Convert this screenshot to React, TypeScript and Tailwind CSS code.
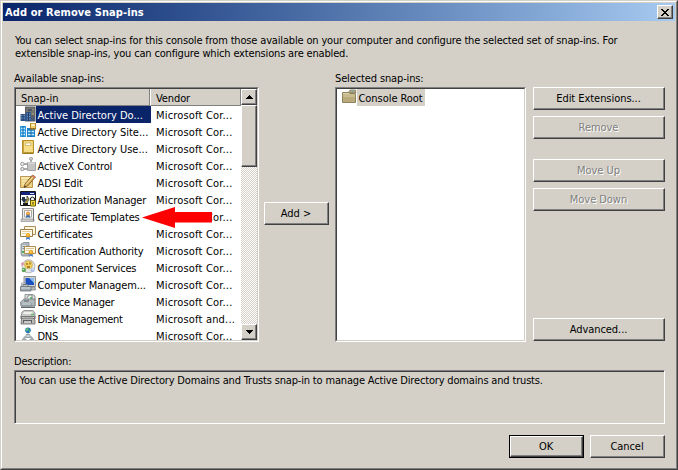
import type { ReactNode } from "react";

const RAISED =
  "border border-t-white border-l-white border-r-[#404040] border-b-[#404040] shadow-[inset_-1px_-1px_0_#808080]";
const SUNKEN =
  "border border-t-[#808080] border-l-[#808080] border-r-white border-b-white";
const SUNKEN_INNER =
  "border border-t-[#404040] border-l-[#404040] border-r-[#d4d0c8] border-b-[#d4d0c8]";

function Svg({ children, className = "" }: { children: ReactNode; className?: string }) {
  return (
    <svg width="16" height="16" viewBox="0 0 16 16" className={`block shrink-0 ${className}`}>
      {children}
    </svg>
  );
}

function Ribbon({ x, y }: { x: number; y: number }) {
  return (
    <g transform={`translate(${x} ${y})`}>
      <path d="M1 3L0.5 7L2.5 5.8L4.5 7L4 3Z" fill="#3f78c8" />
      <circle cx="2.5" cy="2.3" r="2.2" fill="#e8a01c" />
      <circle cx="2.3" cy="2" r="0.9" fill="#ffd65a" />
    </g>
  );
}

const icons = {
  domains: (
    <Svg>
      <path d="M5 0.5H15.5V15.5H5Z" fill="#5d5f62" />
      <path d="M6 1.5H14.5V9H6Z" fill="#77756c" />
      <path d="M8 3H12V5H8Z" fill="#4b5871" />
      <path d="M6 11H15V15H6Z" fill="#4d5c78" />
      <path d="M0.5 8H6V15H0.5ZM6 6H11V15H6Z" fill="#31588d" />
      <path d="M1 9.5H5M1 12H5M7 8H10.5M7 10.5H10.5M7 13H10.5" stroke="#7699b9" />
      <path d="M3 8V15M8.5 6V15" stroke="#203e70" />
      <path d="M12 7L14 9M13 3V4" stroke="#aaa37c" />
    </Svg>
  ),
  sites: (
    <Svg>
      <path d="M0 3H6V14H0Z" fill="#2c9ae0" />
      <path d="M7 5H15V14H7Z" fill="#1d7fc6" />
      <path d="M1 5.5H5M1 8.5H5M1 11.5H5M8 8.5H14M8 11.5H14" stroke="#c8efff" strokeWidth="1.3" />
      <path d="M3 3V14M11 6V14" stroke="#1268a9" />
      <path d="M10.5 0H15.5V6H10.5Z" fill="#f2d26a" stroke="#b48b2b" />
      <path d="M11.5 1.5H14.5V3H11.5Z" fill="#fffbe6" />
      <path d="M10 5.7H16" stroke="#8b671d" />
    </Svg>
  ),
  users: (
    <Svg>
      <path d="M2.5 0.5H13.5V13.5H2.5Z" fill="#e9c85c" stroke="#b58c28" />
      <path d="M4 1.5H12.5V10H4Z" fill="#f7df89" />
      <path d="M5.5 3H11V5.5H5.5Z" fill="#fffef4" stroke="#bb9b46" strokeWidth="0.6" />
      <path d="M3 11H13" stroke="#fff1b2" />
      <path d="M3 13H13" stroke="#876814" />
      <path d="M3.5 1V13" stroke="#cba442" />
    </Svg>
  ),
  activex: (
    <Svg>
      <path d="M11 2V6M4 7H8M4 12H8" stroke="#929292" strokeWidth="1.3" />
      <circle cx="11" cy="1.7" r="1.5" fill="#dedede" stroke="#888" strokeWidth="0.8" />
      <circle cx="2.3" cy="7" r="1.7" fill="#eee" stroke="#888" strokeWidth="0.8" />
      <circle cx="2.3" cy="12" r="1.7" fill="#ddd" stroke="#888" strokeWidth="0.8" />
      <path d="M7.5 5.5H15.5V13.5H7.5Z" fill="#c3c3c3" stroke="#a2a2a2" />
      <path d="M8 6H15" stroke="#eee" />
    </Svg>
  ),
  adsi: (
    <Svg>
      <path d="M0.5 2.5H12.5V13.5H0.5Z" fill="#ecd183" stroke="#b9984d" />
      <path d="M1 3H12V5H1Z" fill="#f8e8b4" />
      <path d="M2 7H10M2 10H9" stroke="#fff4c9" />
      <path d="M12.5 1L15.5 3L7.5 12L4 13.5L5 10Z" fill="#d6a74e" stroke="#72562c" strokeWidth="0.8" />
      <path d="M6 10.5L13 3" stroke="#fff0b2" />
      <path d="M12.5 1L15.5 3L14.3 4.3L11.4 2.3Z" fill="#d67c67" />
      <path d="M4 13.5L4.6 11.8L6 12.8Z" fill="#333" />
    </Svg>
  ),
  auth: (
    <Svg>
      <path d="M0.5 0.5H15.5V14.5H0.5Z" fill="#fff" stroke="#151515" />
      <path d="M1 1H15V4H1Z" fill="#14237c" />
      <path d="M10 2.5H14" stroke="#e6e6e6" />
      <path d="M2 6H5V8H7L4 12L1 8H2Z" fill="#27354a" />
      <path d="M7 5L9 8L6 14H3L7 9Z" fill="#e5d44c" stroke="#181818" strokeWidth="0.7" />
      <path d="M3 13H8" stroke="#1c1c1c" strokeWidth="2" />
      <path d="M10.5 10V7.5Q12.5 4.5 14.5 7.5V10" fill="none" stroke="#222" strokeWidth="1.2" />
      <path d="M10.5 9.5H15.5V15H10.5Z" fill="#f5dd36" stroke="#665d00" />
      <path d="M13 11V13.5" stroke="#222" />
    </Svg>
  ),
  templates: (
    <Svg>
      <path d="M2.5 0.5H13.5V11.5H2.5Z" fill="#eee" stroke="#92908e" />
      <path d="M4.5 2.5H11.5V9H4.5Z" fill="#fff" stroke="#aaa69f" />
      <path d="M1 11H14V13.5H1Z" fill="#cac9c7" stroke="#8b8986" strokeWidth="0.6" />
      <path d="M13.5 1V13" stroke="#777" />
      <path d="M6.5 6L6 10L8 9L10 10L9.5 6Z" fill="#346cb4" />
      <circle cx="8" cy="5.5" r="2" fill="#dd8d38" />
      <circle cx="8" cy="5.3" r="0.8" fill="#ffe17d" />
    </Svg>
  ),
  certificates: (
    <Svg>
      <path d="M4.5 1.5H15.5V9.5H4.5Z" fill="#fff8de" stroke="#a98c5c" />
      <path d="M0.5 4.5H12.5V11.5H0.5Z" fill="#fffdf1" stroke="#a27c43" />
      <path d="M2 6.5H11M2 8.5H6" stroke="#e4cf9d" />
      <Ribbon x={5.5} y={8} />
    </Svg>
  ),
  authority: (
    <Svg>
      <path d="M1 2L4 0.5H9V14H2L1 12Z" fill="#adb7bd" stroke="#7d8b91" strokeWidth="0.8" />
      <path d="M2 3H6V12H2Z" fill="#d4dde0" />
      <path d="M2.5 4.5H5.5M2.5 6.5H5.5" stroke="#738c95" />
      <path d="M2 10H4" stroke="#4fab55" strokeWidth="2" />
      <path d="M4.5 4.5H15.5V11.5H4.5Z" fill="#fffbea" stroke="#b18a51" />
      <path d="M6 6.5H14M6 8.5H9" stroke="#dbc28e" />
      <Ribbon x={8.5} y={8} />
    </Svg>
  ),
  component: (
    <Svg>
      <circle cx="8.5" cy="7.3" r="6.5" fill="#e8e8e6" stroke="#b6b6b5" />
      <circle cx="8.5" cy="5.8" r="4" fill="#f5d15d" stroke="#bda049" strokeWidth="0.6" />
      <path d="M7 4V6M10 3.5V5.5M7 8H10" stroke="#976b22" strokeWidth="1.3" />
      <circle cx="3.8" cy="11" r="2.2" fill="#5da657" />
      <circle cx="3.2" cy="10.5" r="0.8" fill="#bfe1a9" />
      <circle cx="12.6" cy="11.2" r="2" fill="#a9bbe3" />
      <circle cx="2.5" cy="5" r="1.4" fill="#de8ca7" />
      <circle cx="13" cy="10.6" r="0.7" fill="#fff" />
    </Svg>
  ),
  computer: (
    <Svg>
      <path d="M4 0.5H15.5V10.5H4Z" fill="#d1d1cd" stroke="#8f918f" />
      <path d="M5.5 2H14V9H5.5Z" fill="#1b51c1" />
      <path d="M9 2H14V7Z" fill="#86bbed" />
      <path d="M1.5 7H5V12H1.5Z" fill="#e0e0dc" stroke="#999" strokeWidth="0.7" />
      <path d="M6 11H15L15.5 14H5Z" fill="#b5b8b8" stroke="#7c8082" strokeWidth="0.7" />
      <path d="M0.5 10.5H11V15H0.5Z" fill="#9ba6ad" stroke="#667178" strokeWidth="0.8" />
      <path d="M3 10V8.5H8V10" fill="none" stroke="#66777f" />
      <path d="M1 12H10.5" stroke="#d9e2e4" />
    </Svg>
  ),
  device: (
    <Svg>
      <path d="M5 5V1.5H13L15 3V13H5Z" fill="#d8dad7" stroke="#929a99" />
      <path d="M7 5L9 2H12V7" fill="#eff4f2" stroke="#838f8f" />
      <path d="M0.5 9L4 6H15V13H1Z" fill="#b0babd" stroke="#707a7e" strokeWidth="0.8" />
      <path d="M1 10H12V14.5H1Z" fill="#929da2" />
      <path d="M2 11H11" stroke="#dce3e4" />
      <path d="M4 8H9" stroke="#555f63" />
      <path d="M11 4V6" stroke="#42b052" strokeWidth="1.5" />
      <path d="M1 14.5H15" stroke="#5d686d" />
    </Svg>
  ),
  disk: (
    <Svg>
      <path d="M2 2L4 0.5H13L15 3V7H1Z" fill="#c9c9c8" stroke="#848484" strokeWidth="0.8" />
      <path d="M4 2H12L13 4H3Z" fill="#f0f0ed" />
      <path d="M11 4.5H14" stroke="#63b965" strokeWidth="1.5" />
      <path d="M0.5 6H15.5V9H0.5Z" fill="#777" />
      <path d="M2 7.5H14" stroke="#ddd" />
      <path d="M1.5 9L3 8H13L15 10V14H1Z" fill="#b9b9b7" stroke="#666" strokeWidth="0.8" />
      <path d="M3 10H12V13H3Z" fill="#5d5d5d" />
      <path d="M4 12H11" stroke="#eee" strokeWidth="1.5" />
    </Svg>
  ),
  dns: (
    <Svg>
      <circle cx="8" cy="3.2" r="2.8" fill="#2577b8" />
      <path d="M6 1.5H9L8 3.5L6 4ZM9 3.5H10.5L9 5.5Z" fill="#64c765" />
      <path d="M8 6V10M4 13V10H12V13" fill="none" stroke="#7e8b91" />
      <path d="M6 7.5H10V10.5H6Z" fill="#c9d3d6" stroke="#819096" strokeWidth="0.7" />
      <path d="M2.5 12H6V16H2.5ZM10 12H13.5V16H10Z" fill="#b6c3c9" stroke="#7b8991" strokeWidth="0.7" />
    </Svg>
  ),
};

const rows: { icon: ReactNode; name: string; vendor: string; tracking: string }[] = [
  { icon: icons.domains, name: "Active Directory Do...", vendor: "Microsoft Cor...", tracking: "" },
  { icon: icons.sites, name: "Active Directory Site...", vendor: "Microsoft Cor...", tracking: "" },
  { icon: icons.users, name: "Active Directory Use...", vendor: "Microsoft Cor...", tracking: "" },
  { icon: icons.activex, name: "ActiveX Control", vendor: "Microsoft Cor...", tracking: "tracking-[-0.1px]" },
  { icon: icons.adsi, name: "ADSI Edit", vendor: "Microsoft Cor...", tracking: "tracking-[-0.05px]" },
  { icon: icons.auth, name: "Authorization Manager", vendor: "Microsoft Cor...", tracking: "tracking-[-0.2px]" },
  { icon: icons.templates, name: "Certificate Templates", vendor: "Microsoft Cor...", tracking: "tracking-[-0.12px]" },
  { icon: icons.certificates, name: "Certificates", vendor: "Microsoft Cor...", tracking: "tracking-[-0.12px]" },
  { icon: icons.authority, name: "Certification Authority", vendor: "Microsoft Cor...", tracking: "tracking-[-0.15px]" },
  { icon: icons.component, name: "Component Services", vendor: "Microsoft Cor...", tracking: "tracking-[-0.2px]" },
  { icon: icons.computer, name: "Computer Managem...", vendor: "Microsoft Cor...", tracking: "tracking-[-0.13px]" },
  { icon: icons.device, name: "Device Manager", vendor: "Microsoft Cor...", tracking: "tracking-[-0.25px]" },
  { icon: icons.disk, name: "Disk Management", vendor: "Microsoft and...", tracking: "tracking-[-0.3px]" },
  { icon: icons.dns, name: "DNS", vendor: "Microsoft Cor...", tracking: "tracking-[-0.3px]" },
];

function Button({
  children,
  className = "",
  disabled = false,
}: {
  children: ReactNode;
  className?: string;
  disabled?: boolean;
}) {
  return (
    <button
      disabled={disabled}
      className={`flex h-[23px] shrink-0 items-center justify-center bg-[#d4d0c8] pr-px pb-px tracking-[-0.05px] ${RAISED} ${
        disabled ? "text-[#808080] [text-shadow:1px_1px_0_#fff]" : ""
      } ${className}`}
    >
      {children}
    </button>
  );
}

function ScrollButton({ up = false }: { up?: boolean }) {
  return (
    <div className={`flex h-4 w-4 shrink-0 items-center justify-center bg-[#d4d0c8] ${RAISED}`}>
      <svg width="7" height="4" viewBox="0 0 7 4" shapeRendering="crispEdges">
        <path d={up ? "M3 0H4V1H5V2H6V3H7V4H0V3H1V2H2V1H3Z" : "M0 0H7V1H6V2H5V3H4V4H3V3H2V2H1V1H0Z"} />
      </svg>
    </div>
  );
}

function SnapInList() {
  return (
    <div className={`relative h-[255px] w-[245px] shrink-0 ${SUNKEN}`}>
      <div className={`flex h-full w-full overflow-hidden bg-white ${SUNKEN_INNER}`}>
        <div className="w-[225px] shrink-0">
          <div className="flex h-[17px] bg-[#d4d0c8]">
            <div className="w-[134px] border-r border-b border-[#808080] pl-[5px] leading-[19px]">Snap-in</div>
            <div className="w-[91px] border-r border-b border-l border-r-[#808080] border-b-[#808080] border-l-white pl-[5px] leading-[19px] tracking-[-0.1px]">
              Vendor
            </div>
          </div>
          {rows.map((row, i) => (
            <div key={row.name} className="flex h-[17px] pl-1 leading-[20px]">
              {row.icon}
              <div
                className={`w-[115px] overflow-hidden pl-[1.5px] whitespace-nowrap ${
                  i === 0 ? "bg-[#0a246a] text-white" : ""
                } ${row.tracking}`}
              >
                {row.name}
              </div>
              <div className="pl-[5px] tracking-[0.18px] whitespace-nowrap">{row.vendor}</div>
            </div>
          ))}
        </div>
        <div className="flex h-full w-4 flex-col bg-[repeating-conic-gradient(#d4d0c8_0_25%,#fff_0_50%)] bg-[length:2px_2px]">
          <ScrollButton up />
          <div className={`h-[62px] bg-[#d4d0c8] ${RAISED}`} />
          <div className="flex-1" />
          <ScrollButton />
        </div>
      </div>
      <svg width="70" height="22" viewBox="0 0 70 22" className="absolute top-[119px] left-[127px]">
        <path d="M0 10.5L33 0V5H70V15.5H33V21Z" fill="#fe0000" />
      </svg>
    </div>
  );
}

export default function App() {
  return (
    <div className="h-[470px] w-[678px] overflow-hidden border border-t-[#d4d0c8] border-r-[#404040] border-b-[#404040] border-l-[#d4d0c8] bg-[#d4d0c8] font-['DejaVu_Sans_Condensed','DejaVu_Sans',sans-serif] text-[11px] leading-[13px] text-black">
      <div className="flex h-full flex-col border border-t-white border-r-[#808080] border-b-[#808080] border-l-white p-px">
        <div className="flex h-[18px] shrink-0 items-center justify-between bg-linear-to-r from-[#0a246a] to-[#a6caf0] pr-[2px] pl-[2px]">
          <span className="font-bold tracking-[0.09px] text-white">Add or Remove Snap-ins</span>
          <div className={`flex h-[14px] w-4 items-center justify-center bg-[#d4d0c8] ${RAISED}`}>
            <svg width="8" height="7" viewBox="0 0 8 7" shapeRendering="crispEdges">
              <path d="M0 0H2V1H3V2H5V1H6V0H8V1H7V2H6V3H5V4H6V5H7V6H8V7H6V6H5V5H3V6H2V7H0V6H1V5H2V4H3V3H2V2H1V1H0Z" />
            </svg>
          </div>
        </div>
        <div className="pt-[13px] pl-[12px] tracking-[-0.165px] whitespace-nowrap">
          <p>You can select snap-ins for this console from those available on your computer and configure the selected set of snap-ins. For</p>
          <p>extensible snap-ins, you can configure which extensions are enabled.</p>
        </div>
        <div className="flex pt-[12px] pl-[11px]">
          <div className="w-[250px] shrink-0">
            <div className="mb-[2px] tracking-[-0.13px]">Available snap-ins:</div>
            <SnapInList />
          </div>
          <Button className="mt-[130px] w-[65px]">Add &gt;</Button>
          <div className="ml-[6px] w-[191px] shrink-0">
            <div className="mb-[2px] tracking-[-0.13px]">Selected snap-ins:</div>
            <div className={`h-[255px] ${SUNKEN}`}>
              <div className={`flex h-full items-start bg-white pl-[5px] ${SUNKEN_INNER}`}>
                <Svg>
                  <path d="M7 2.5L8 1H13.5L14 3.5H7Z" fill="#bcae83" stroke="#847a5c" strokeWidth="0.8" />
                  <path d="M9 2H12" stroke="#72a3bd" />
                  <path d="M0.5 3.5H7L8 4.5H13.5V13.5H0.5Z" fill="#b9ab7c" stroke="#8f835d" />
                  <path d="M1 5H13V8H1Z" fill="#c9bc8e" />
                  <path d="M1 4.5H7" stroke="#ddd2ac" />
                </Svg>
                <div className="-ml-px h-[17px] w-[68px] bg-[#d4d0c8] pl-[1.5px] leading-[20px] tracking-[-0.05px] whitespace-nowrap">Console Root</div>
              </div>
            </div>
          </div>
          <div className="ml-[7px] flex w-[132px] shrink-0 flex-col pt-[15px]">
            <Button>Edit Extensions...</Button>
            <Button disabled className="mt-[6px]">Remove</Button>
            <Button disabled className="mt-5">Move Up</Button>
            <Button disabled className="mt-[6px]">Move Down</Button>
            <Button className="mt-[107px]">Advanced...</Button>
          </div>
        </div>
        <div className="pt-[13px] pl-[11px]">
          <div className="mb-[2px] tracking-[-0.2px]">Description:</div>
          <div className={`h-[54px] w-[651px] ${SUNKEN}`}>
            <div className="h-full border-t border-l border-[#404040] pt-[2px] pl-[3.5px] tracking-[-0.17px]">
              You can use the Active Directory Domains and Trusts snap-in to manage Active Directory domains and trusts.
            </div>
          </div>
        </div>
        <div className="flex justify-end gap-[6px] pt-[11px] pr-[10px]">
          <div className="border border-black">
            <Button className="h-[21px]! w-[73px]">OK</Button>
          </div>
          <Button className="w-[75px]">Cancel</Button>
        </div>
      </div>
    </div>
  );
}
